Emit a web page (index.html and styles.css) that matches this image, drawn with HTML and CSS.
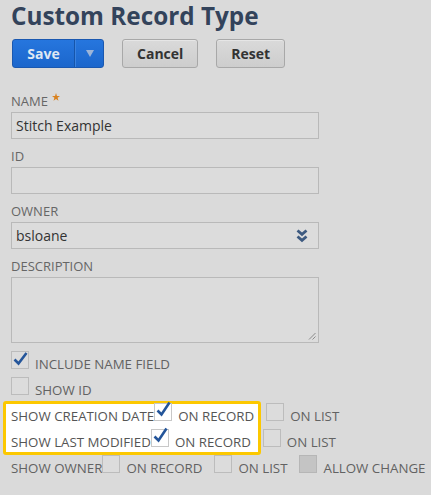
FILE: index.html
```html
<!DOCTYPE html>
<html lang="en">
<head>
<meta charset="utf-8">
<title>Custom Record Type</title>
<link rel="stylesheet" href="styles.css">
</head>
<body>
<div class="page">
  <h1 class="title">Custom Record Type</h1>
  <div class="actions">
    <div class="split">
      <span class="split-main">Save</span>
      <span class="split-arrow"><svg width="8" height="7" viewBox="0 0 8 7"><path d="M0 0 H8 L4 7 Z" fill="#9db5d8"/></svg></span>
    </div>
    <button class="btn" type="button">Cancel</button>
    <button class="btn" type="button">Reset</button>
  </div>

  <div class="field">
    <div class="lbl">NAME <svg class="req" width="8" height="8" viewBox="0 0 10 10"><path d="M5 0 L6.2 3.6 L10 3.7 L7 6 L8.1 9.7 L5 7.5 L1.9 9.7 L3 6 L0 3.7 L3.8 3.6 Z" fill="#d9821f"/></svg></div>
    <div class="inp">Stitch Example</div>
  </div>
  <div class="field">
    <div class="lbl">ID</div>
    <div class="inp"></div>
  </div>
  <div class="field">
    <div class="lbl">OWNER</div>
    <div class="inp sel">
      <span>bsloane</span>
      <svg class="chev" width="12" height="14" viewBox="0 0 12 14"><path d="M1.5 1.5 L6 5.3 L10.5 1.5" fill="none" stroke="#3d5a80" stroke-width="2.8"/><path d="M1.5 7.5 L6 11.3 L10.5 7.5" fill="none" stroke="#3d5a80" stroke-width="2.8"/></svg>
    </div>
  </div>
  <div class="field">
    <div class="lbl">DESCRIPTION</div>
    <div class="inp area">
      <svg class="grip" width="8" height="8" viewBox="0 0 8 8"><path d="M7.5 1 L1 7.5 M7.5 4.5 L4.5 7.5" stroke="#8a8a8a" stroke-width="1"/></svg>
    </div>
  </div>

  <div class="opt-row">
    <span class="cb"><svg class="ck" viewBox="0 0 18 18" width="18" height="18"><path d="M3.5 8.5 L7.5 12.5 L15.5 2" fill="none" stroke="#24559a" stroke-width="2.6"/></svg></span>
    <span class="opt">INCLUDE NAME FIELD</span>
  </div>
  <div class="opt-row">
    <span class="cb"></span>
    <span class="opt">SHOW ID</span>
  </div>

  <div class="hl-group">
    <div class="highlight"></div>
    <div class="opt-row">
      <span class="rowlbl on">SHOW CREATION DATE</span>
      <span class="cb on"><svg class="ck" viewBox="0 0 18 18" width="18" height="18"><path d="M3.5 7.5 L7.5 11.5 L15.5 -0.5" fill="none" stroke="#24559a" stroke-width="2.6"/></svg></span>
      <span class="opt on">ON RECORD</span>
      <span class="cb"></span>
      <span class="opt">ON LIST</span>
    </div>
    <div class="opt-row">
      <span class="rowlbl on">SHOW LAST MODIFIED</span>
      <span class="cb on"><svg class="ck" viewBox="0 0 18 18" width="18" height="18"><path d="M3.5 7.5 L7.5 11.5 L15.5 -0.5" fill="none" stroke="#24559a" stroke-width="2.6"/></svg></span>
      <span class="opt on">ON RECORD</span>
      <span class="cb"></span>
      <span class="opt">ON LIST</span>
    </div>
  </div>
  <div class="opt-row">
    <span class="rowlbl">SHOW OWNER</span>
    <span class="cb"></span>
    <span class="opt">ON RECORD</span>
    <span class="cb"></span>
    <span class="opt">ON LIST</span>
    <span class="cb off"></span>
    <span class="opt">ALLOW CHANGE</span>
  </div>
</div>
</body>
</html>
```

FILE: styles.css
```css
* { box-sizing: border-box; }
html, body { margin: 0; background: #dadada; }
body { font-family: "Open Sans", "Liberation Sans", sans-serif; color: #333; }

.page { padding: 1px 11px 0 11px; }

.title {
  margin: 0;
  font-size: 24.3px;
  line-height: 30px;
  font-weight: 700;
  color: #33435b;
}

.actions {
  display: flex;
  gap: 18px;
  margin: 8px 0 0 1px;
  height: 29px;
}

.split {
  display: flex;
  height: 29px;
  width: 92px;
  border: 1px solid #1a58b0;
  border-radius: 3px;
  background: linear-gradient(#2676de, #1b66cc);
  overflow: hidden;
}
.split-main {
  width: 62px;
  display: flex;
  align-items: center;
  justify-content: center;
  color: #dfe7f3;
  font-weight: 700;
  font-size: 14px;
  border-right: 1px solid #1655aa;
}
.split-arrow {
  flex: 1;
  display: flex;
  align-items: center;
  justify-content: center;
  border-left: 1px solid #3a82e0;
}

.btn {
  height: 29px;
  padding: 0 14px;
  border: 1px solid #a8a8a8;
  border-radius: 3px;
  background: linear-gradient(#dadada, #cdcdcd);
  font-family: "Open Sans", "Liberation Sans", sans-serif;
  font-weight: 700;
  font-size: 14px;
  color: #333;
  box-shadow: inset 0 1px 0 #e6e6e6;
}

.field { margin-top: 25px; }
.field + .field { margin-top: 9px; }

.lbl {
  font-size: 13px;
  line-height: 16px;
  color: #666;
  height: 16px;
  margin-bottom: 3px;
  display: flex;
  align-items: flex-start;
  gap: 4px;
}

.inp {
  width: 308px;
  height: 27px;
  border: 1px solid #b9b9b9;
  background: #dcdcdc;
  font-size: 14px;
  line-height: 25px;
  padding: 0 4px;
  color: #333;
}
.sel {
  display: flex;
  align-items: center;
  justify-content: space-between;
  padding-right: 10px;
}
.chev { display: block; }
.area {
  height: 66px;
  position: relative;
}
.grip { position: absolute; right: 2px; bottom: 2px; }

.opt-row {
  display: flex;
  align-items: baseline;
  margin-top: 5px;
}
.opt-row > * { flex-shrink: 0; }
.field + .opt-row { margin-top: 8px; }

.cb {
  display: inline-block;
  width: 18px;
  height: 18px;
  border: 1px solid #bcbcbc;
  background: #dcdcdc;
  margin: 0 6px 1px 0;
  position: relative;
}
.cb.on { background: #fff; border-color: #c8c8c8; }
.cb.off { background: #c4c4c4; border-color: #b6b6b6; }
.ck { position: absolute; left: -1px; top: -1px; overflow: visible; }

.opt, .rowlbl {
  font-size: 13.3px;
  line-height: 16px;
  color: #626262;
  white-space: nowrap;
}
.opt { margin-right: 12px; }
.on { color: #555; position: relative; }

.hl-group {
  position: relative;
  margin-top: 5px;
}
.hl-group .opt-row:first-of-type { margin-top: 0; }
.highlight {
  position: absolute;
  left: -8px;
  top: -2px;
  width: 258px;
  height: 54px;
  background: #fff;
  border: 3px solid #fcc800;
  border-radius: 3px;
}
.hl-group .opt-row { position: relative; }
```
